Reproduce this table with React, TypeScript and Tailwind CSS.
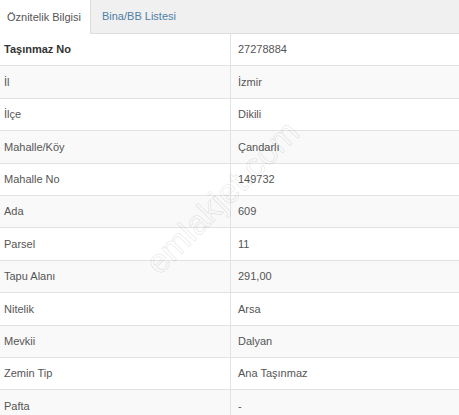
import React from "react";

const rows: [string, string][] = [
  ["Taşınmaz No", "27278884"],
  ["İl", "İzmir"],
  ["İlçe", "Dikili"],
  ["Mahalle/Köy", "Çandarlı"],
  ["Mahalle No", "149732"],
  ["Ada", "609"],
  ["Parsel", "11"],
  ["Tapu Alanı", "291,00"],
  ["Nitelik", "Arsa"],
  ["Mevkii", "Dalyan"],
  ["Zemin Tip", "Ana Taşınmaz"],
  ["Pafta", "-"],
];

export default function App() {
  return (
    <div
      className="relative w-[459px] h-[415px] overflow-hidden bg-white text-[11px] text-[#555]"
      style={{ fontFamily: '"Liberation Sans", Arial, sans-serif' }}
    >
      <div className="flex h-[34px] bg-[#f0f0f0] border-b border-[#dddddd]">
        <div className="flex items-center bg-white pl-[7px] pr-[9px] h-[35px] text-[#555] border-r border-[#dddddd]">
          Öznitelik Bilgisi
        </div>
        <div className="flex items-center pl-[11px] text-[#4e7fa8]">Bina/BB Listesi</div>
      </div>
      <div className="flex flex-col">
        {rows.map(([k, v], i) => (
          <div
            key={k}
            className={`flex h-[32.4px] shrink-0 border-b border-[#e2e2e2] ${
              i % 2 === 1 ? "bg-[#f9f9f9]" : "bg-white"
            }`}
          >
            <div
              className={`flex items-center w-[231px] pl-[4px] border-r border-[#e2e2e2] ${
                i === 0 ? "font-bold text-[#333]" : "text-[#555]"
              }`}
            >
              {k}
            </div>
            <div className="flex items-center pl-[7px] text-[#555]">{v}</div>
          </div>
        ))}
      </div>
      <div
        className="pointer-events-none absolute left-[122px] top-[172px] w-[200px] text-center text-[34px] text-transparent -rotate-45"
        style={{ WebkitTextStroke: "1px rgba(0,0,0,0.09)" }}
      >
        emlakjet.com
      </div>
    </div>
  );
}
